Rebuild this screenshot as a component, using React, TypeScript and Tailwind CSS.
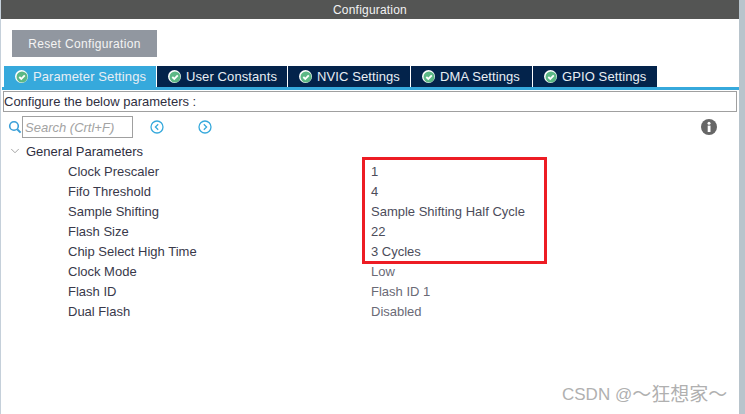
import { ChevronDown } from 'lucide-react';

const tabs = [
  { label: 'Parameter Settings', width: 'w-[152px]', active: true },
  { label: 'User Constants', width: 'w-[130px]' },
  { label: 'NVIC Settings', width: 'w-[122px]' },
  { label: 'DMA Settings', width: 'w-[121px]' },
  { label: 'GPIO Settings', width: 'w-[124px]' },
];

const params = [
  ['Clock Prescaler', '1'],
  ['Fifo Threshold', '4'],
  ['Sample Shifting', 'Sample Shifting Half Cycle'],
  ['Flash Size', '22'],
  ['Chip Select High Time', '3 Cycles'],
  ['Clock Mode', 'Low'],
  ['Flash ID', 'Flash ID 1'],
  ['Dual Flash', 'Disabled'],
];

function CheckBadge() {
  return (
    <svg width="12" height="12" viewBox="0 0 12 12" className="shrink-0">
      <circle cx="6" cy="6" r="5.5" fill="#5cb885" />
      <path d="M3.3 6 L5.3 8 L8.8 4.4" fill="none" stroke="#fff" strokeWidth="1.8" />
    </svg>
  );
}

function CircleArrow({ dir }: { dir: 'left' | 'right' }) {
  return (
    <svg width="14" height="14" viewBox="0 0 14 14">
      <circle cx="7" cy="7" r="6" fill="none" stroke="#36a9dc" strokeWidth="1.3" />
      <path
        d={dir === 'left' ? 'M8.2 4.2 L5.4 7 L8.2 9.8' : 'M5.8 4.2 L8.6 7 L5.8 9.8'}
        fill="none"
        stroke="#36a9dc"
        strokeWidth="1.3"
      />
    </svg>
  );
}

export default function App() {
  return (
    <div className="w-[745px] h-[414px] overflow-hidden flex bg-white text-[13px] font-['Liberation_Sans',sans-serif] text-[#39394a]">
      <div className="w-px bg-[#c5d0da]" />

      <div className="relative w-[738px] flex flex-col">
        {/* 标题栏 */}
        <div className="h-[19px] bg-[#545554] text-[#f2f2f2] text-[12px] tracking-[0.2px] leading-[20px] text-center">
          Configuration
        </div>

        <div className="pl-[11px] pt-[11px]">
          <div className="w-[145px] h-[27px] bg-[#9197a0] text-[#f4f4f4] text-[12px] tracking-[0.35px] leading-[28px] text-center">
            Reset Configuration
          </div>
        </div>

        {/* 选项卡 */}
        <div className="flex gap-px pl-[3px] mt-[9px] h-[21px]">
          {tabs.map((tab) => (
            <div
              key={tab.label}
              className={`${tab.width} flex items-center pl-[11px] gap-[5px] tracking-[0.1px] text-[#e8eef4] ${
                tab.active ? 'bg-[#36a9dc]' : 'bg-[#03234b]'
              }`}
            >
              <span className="flex size-[13px] items-center justify-center rounded-full bg-white">
                <CheckBadge />
              </span>
              <span className="whitespace-nowrap">{tab.label}</span>
            </div>
          ))}
        </div>
        <div className="h-[3px] ml-px bg-[#36a9dc]" />

        <div className="mt-px ml-[2px] w-[734px] h-[21px] border border-[#a0a0a0] text-[#2f2f3f] leading-[19px]">
          Configure the below parameters :
        </div>

        {/* 搜索栏 */}
        <div className="flex items-center h-[22px] mt-[4px] pl-[7px] relative">
          <svg width="14" height="14" viewBox="0 0 14 14" className="shrink-0">
            <circle cx="6" cy="6" r="4.3" fill="none" stroke="#3a9fd8" strokeWidth="1.6" />
            <path d="M9.2 9.2 L12.6 12.6" stroke="#3a9fd8" strokeWidth="2" />
          </svg>
          <div className="w-[111px] h-[22px] border border-[#a0a0a0] italic text-[#a3a3a3] leading-[21px] pl-[2px] whitespace-nowrap">
            Search (Crtl+F)
          </div>
          <div className="ml-[17px]">
            <CircleArrow dir="left" />
          </div>
          <div className="ml-[34px]">
            <CircleArrow dir="right" />
          </div>
          <svg width="16" height="16" viewBox="0 0 16 16" className="ml-auto mr-[22px] shrink-0">
            <circle cx="8" cy="8" r="8" fill="#666666" />
            <rect x="6.7" y="6.6" width="2.8" height="6.4" fill="#fff" />
            <circle cx="8" cy="4.2" r="1.5" fill="#fff" />
          </svg>
        </div>

        {/* 参数列表 */}
        <div className="mt-[3px]">
          <div className="flex items-center h-[20px] pl-[7px] text-[#2f2f3f]">
            <ChevronDown size={14} strokeWidth={1.2} className="text-[#808080]" />
            <span className="ml-[4px] leading-[21px]">General Parameters</span>
          </div>
          {params.map(([name, value], i) => (
            <div key={name} className="flex h-[20px] leading-[21px]">
              <div className="w-[370px] pl-[67px]">{name}</div>
              <div className={i < 5 ? 'text-[#4c4c5a]' : 'text-[#6a6a76]'}>{value}</div>
            </div>
          ))}
        </div>

        {/* 红色标注框 */}
        <div className="absolute left-[361px] top-[157px] w-[185px] h-[107px] border-[3px] border-[#ed1c24]" />

        {/* 水印 */}
        <div className="absolute left-[561px] top-[383px] flex items-center h-[24px] text-[#b0b0b0] whitespace-nowrap font-['Liberation_Sans','Noto_Sans_CJK_SC',sans-serif]">
          <span className="text-[17px]">CSDN @</span>
          <span className="text-[19px]">～狂想家～</span>
        </div>
      </div>

      <div className="flex-1 bg-[#b8c4cc]" />
    </div>
  );
}
